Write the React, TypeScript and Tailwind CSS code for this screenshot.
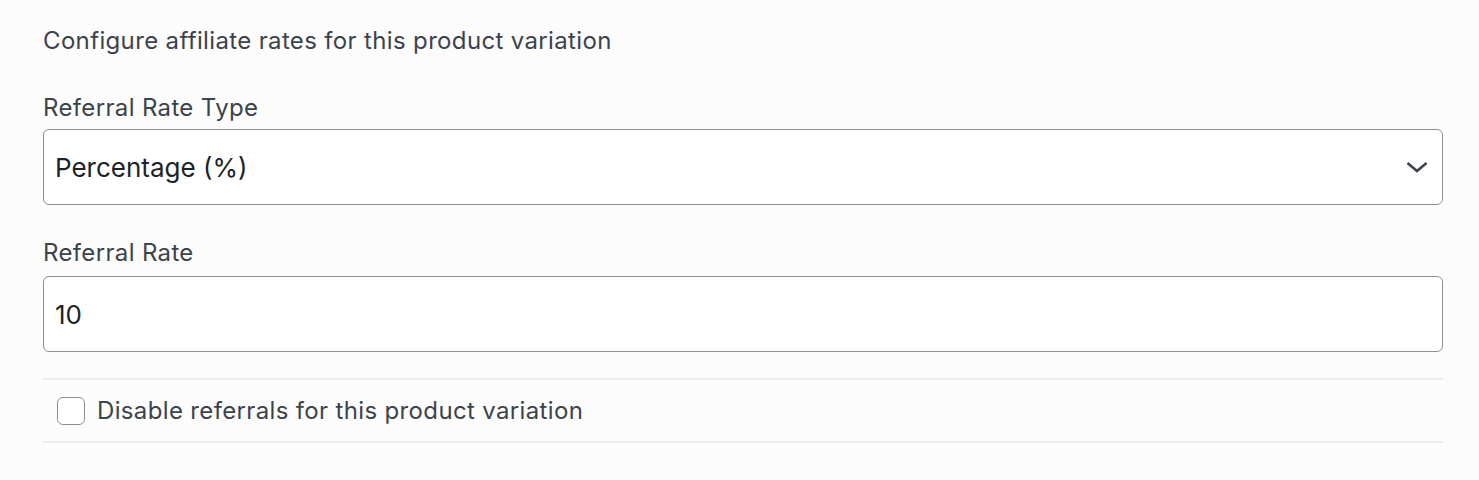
import React from "react";

export default function App() {
  return (
    <div className="min-h-[480px] w-full bg-[#fcfcfc] text-[#3c434a]" style={{ fontFamily: "Inter, 'Noto Sans', sans-serif" }}>
      <div className="pl-[43px] pr-[36px] pt-[26px]">
        <p className="text-[24px] leading-[30px] tracking-[0.35px]">Configure affiliate rates for this product variation</p>
        <div className="mt-[37px]">
          <label className="block text-[24px] leading-[30px] tracking-[0.35px]">Referral Rate Type</label>
          <div className="mt-[6px] h-[76px] border-[1.5px] border-[#8c8f94] rounded-[6px] bg-white flex items-center justify-between pl-[11px] pr-[13px]">
            <span className="text-[26px] text-[#1d2327]">Percentage (%)</span>
            <svg width="24" height="24" viewBox="0 0 24 24" fill="none" stroke="#3c434a" strokeWidth="2.6" strokeLinecap="butt" strokeLinejoin="miter">
              <path d="M2.5 8l9.5 8 9.5-8" />
            </svg>
          </div>
        </div>
        <div className="mt-[33px]">
          <label className="block text-[24px] leading-[30px] tracking-[0.35px]">Referral Rate</label>
          <div className="mt-[8px] h-[76px] border-[1.5px] border-[#8c8f94] rounded-[6px] bg-white flex items-center pl-[11px]">
            <span className="text-[26px] text-[#1d2327]">10</span>
          </div>
        </div>
        <div className="mt-[26px] border-t-2 border-b-2 border-[#ececec] h-[65px] flex items-center pl-[14px]">
          <div className="w-[28px] h-[28px] rounded-[6px] border-[1.5px] border-[#8c8f94] bg-white" />
          <span className="ml-[12px] text-[24px] tracking-[0.35px]">Disable referrals for this product variation</span>
        </div>
      </div>
    </div>
  );
}
